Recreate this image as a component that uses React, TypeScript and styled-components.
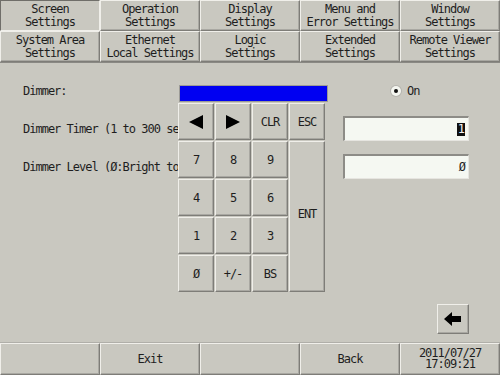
import React from 'react'
import styled, { createGlobalStyle, css } from 'styled-components'

const GlobalStyle = createGlobalStyle`
  html, body {
    margin: 0;
    padding: 0;
    background: #c9c8c0;
  }
`

const bevel = css`
  border-top: 1px solid #f0efea;
  border-left: 1px solid #f0efea;
  border-right: 1px solid #7e7d78;
  border-bottom: 1px solid #7e7d78;
  box-shadow: inset -1px -1px 0 #a9a8a2;
`

const Screen = styled.div`
  width: 500px;
  height: 375px;
  display: flex;
  flex-direction: column;
  background: #c9c8c0;
  color: #1e1e1e;
  font-family: 'DejaVu Sans Mono', 'Liberation Mono', monospace;
  font-size: 12px;
  letter-spacing: -1px;
  overflow: hidden;
`

const TabGrid = styled.div`
  display: grid;
  grid-template-columns: repeat(5, 100px);
  grid-template-rows: 31px 31px;
  border-bottom: 1px solid #8a8984;
`

interface TabProps { $active?: boolean }

const Tab = styled.div<TabProps>`
  box-sizing: border-box;
  display: flex;
  align-items: center;
  justify-content: center;
  text-align: center;
  line-height: 13px;
  white-space: pre;
  ${bevel}
  ${(p) =>
    p.$active &&
    css`
      border-top-color: #6f6e69;
      border-left-color: #6f6e69;
      border-right-color: #f0efea;
      border-bottom-color: #f0efea;
      box-shadow: none;
    `}
`

const Content = styled.div`
  flex: 1;
  position: relative;
  display: flex;
  flex-direction: column;
  padding: 15px 31px 8px 23px;
`

const Form = styled.div`
  display: grid;
  grid-template-columns: 1fr 126px;
  grid-auto-rows: 25px;
  row-gap: 13px;
`

// labels run in under the keypad popup, so they are cut where it starts
const Label = styled.div`
  display: flex;
  align-items: center;
  white-space: nowrap;
  max-width: 155px;
  overflow: hidden;
`

const RadioWrap = styled.div`
  display: flex;
  align-items: center;
  gap: 6px;
  padding-left: 48px;
`

const Radio = styled.span`
  width: 10px;
  height: 10px;
  border-radius: 50%;
  background: #f4f6f0;
  box-shadow: 0 0 0 1px #b5b4ae;
  display: flex;
  align-items: center;
  justify-content: center;

  &::after {
    content: '';
    width: 4px;
    height: 4px;
    border-radius: 50%;
    background: #111;
  }
`

const Field = styled.div`
  box-sizing: border-box;
  height: 25px;
  background: #f5f8f2;
  border-top: 2px solid #8d8c87;
  border-left: 2px solid #8d8c87;
  border-right: 1px solid #e6e5e0;
  border-bottom: 1px solid #e6e5e0;
  display: flex;
  align-items: center;
  justify-content: flex-end;
  padding-right: 3px;
`

const Cursor = styled.span`
  background: #111;
  color: #f5f5f5;
  padding: 0 1px;
  line-height: 13px;
`

const Footer = styled.div`
  margin-top: auto;
  display: flex;
  justify-content: flex-end;
`

const IconButton = styled.div`
  box-sizing: border-box;
  width: 32px;
  height: 30px;
  display: flex;
  align-items: center;
  justify-content: center;
  ${bevel}
`

const Keypad = styled.div`
  position: absolute;
  left: 178px;
  top: 22px;
  width: 150px;
  background: #c9c8c0;
  display: flex;
  flex-direction: column;
  gap: 1px;
`

const Display = styled.div`
  height: 15px;
  margin-left: 1px;
  background: #0000f2;
  border: 1px solid #9c9b96;
`

const Keys = styled.div`
  display: grid;
  grid-template-columns: repeat(4, 36px);
  grid-auto-rows: 37px;
  gap: 1px;
`

interface KeyProps { $tall?: boolean }

const Key = styled.div<KeyProps>`
  box-sizing: border-box;
  display: flex;
  align-items: center;
  justify-content: center;
  ${bevel}
  ${(p) =>
    p.$tall &&
    css`
      grid-column: 4;
      grid-row: 2 / span 4;
      align-items: flex-start;
      padding-top: 65px;
    `}
`

const BottomBar = styled.div`
  display: grid;
  grid-template-columns: repeat(5, 100px);
  height: 32px;
  border-top: 1px solid #b0afa9;
`

const BarButton = styled.div`
  box-sizing: border-box;
  display: flex;
  align-items: center;
  justify-content: center;
  text-align: center;
  line-height: 11px;
  white-space: pre;
  ${bevel}
`

const Triangle = ({ dir }: { dir: 'left' | 'right' }) => (
  <svg width="16" height="16" viewBox="0 0 16 16">
    {dir === 'left' ? (
      <polygon points="1,8 15,1 15,15" fill="#000" />
    ) : (
      <polygon points="15,8 1,1 1,15" fill="#000" />
    )}
  </svg>
)

const BackArrow = () => (
  <svg width="18" height="14" viewBox="0 0 18 14">
    <polygon points="0,7 8,0 8,4 17,4 17,10 8,10 8,14" fill="#000" />
  </svg>
)

const topTabs = [
  'Screen\nSettings',
  'Operation\nSettings',
  'Display\nSettings',
  'Menu and\nError Settings',
  'Window\nSettings',
  'System Area\nSettings',
  'Ethernet\nLocal Settings',
  'Logic\nSettings',
  'Extended\nSettings',
  'Remote Viewer\nSettings',
]

const keys = ['7', '8', '9', '4', '5', '6', '1', '2', '3', 'Ø', '+/-', 'BS']

export default function App() {
  return (
    <Screen>
      <GlobalStyle />
      <TabGrid>
        {topTabs.map((t, i) => (
          <Tab key={t} $active={i === 0}>
            {t}
          </Tab>
        ))}
      </TabGrid>

      <Content>
        <Form>
          <Label>Dimmer:</Label>
          <RadioWrap>
            <Radio />
            <span>On</span>
          </RadioWrap>
          <Label>Dimmer Timer (1 to 300 sec)</Label>
          <Field>
            <Cursor>1</Cursor>
          </Field>
          <Label>Dimmer Level (Ø:Bright to 3:Dark)</Label>
          <Field>Ø</Field>
        </Form>

        <Footer>
          <IconButton>
            <BackArrow />
          </IconButton>
        </Footer>

        <Keypad>
          <Display />
          <Keys>
            <Key><Triangle dir="left" /></Key>
            <Key><Triangle dir="right" /></Key>
            <Key>CLR</Key>
            <Key>ESC</Key>
            {keys.slice(0, 3).map((k) => <Key key={k}>{k}</Key>)}
            <Key $tall>ENT</Key>
            {keys.slice(3).map((k) => <Key key={k}>{k}</Key>)}
          </Keys>
        </Keypad>
      </Content>

      <BottomBar>
        <BarButton />
        <BarButton>Exit</BarButton>
        <BarButton />
        <BarButton>Back</BarButton>
        <BarButton>{'2011/07/27\n17:09:21'}</BarButton>
      </BottomBar>
    </Screen>
  )
}
